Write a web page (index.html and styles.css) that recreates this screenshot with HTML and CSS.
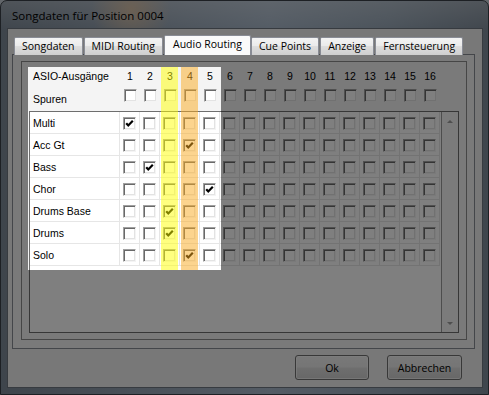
FILE: index.html
```html
<!DOCTYPE html>
<html lang="de">
<head>
    <meta charset="UTF-8">
    <title>Songdaten für Position 0004</title>
    <link rel="stylesheet" href="styles.css">
</head>
<body>
    <div class="window">
        <div class="titlebar">Songdaten für Position 0004</div>
        <div class="client">
            <div class="tabs">
                <div class="tab">Songdaten</div>
                <div class="tab">MIDI Routing</div>
                <div class="tab active">Audio Routing</div>
                <div class="tab">Cue Points</div>
                <div class="tab">Anzeige</div>
                <div class="tab">Fernsteuerung</div>
            </div>
            <div class="panel">
                <div class="frame">
                    <div class="head" id="head">
                        <div class="lbl">ASIO-Ausgänge</div>
                    </div>
                    <div class="list">
                        <div class="rows" id="rows"></div>
                        <div class="scroll">
                            <span class="arr up"></span>
                            <span class="arr down"></span>
                        </div>
                    </div>
                </div>
            </div>
            <div class="buttons">
                <button class="btn">Ok</button>
                <button class="btn">Abbrechen</button>
            </div>
        </div>
    </div>

    <!-- overlay: dims everything except the routing area -->
    <div class="spot"></div>
    <div class="mark yellow"></div>
    <div class="mark orange"></div>

    <script>
        const outputs = 16;
        const tracks = [
            ['Multi', 1],
            ['Acc Gt', 4],
            ['Bass', 2],
            ['Chor', 5],
            ['Drums Base', 3],
            ['Drums', 3],
            ['Solo', 4]
        ];
        const check = '<svg width="9" height="9" viewBox="0 0 9 9"><path d="M1.2 4.2 L3.3 6.5 L7.8 1.8" fill="none" stroke="#000" stroke-width="2.2"/></svg>';

        function box(on) {
            return `<span class="cb">${on ? check : ''}</span>`;
        }

        const head = document.getElementById('head');
        let html = head.innerHTML;
        for (let i = 1; i <= outputs; i++) {
            html += `<div class="num">${i}</div>`;
        }
        html += '<div class="lbl low">Spuren</div>';
        for (let i = 1; i <= outputs; i++) {
            html += `<div class="hc">${box(false)}</div>`;
        }
        head.innerHTML = html;

        const rows = document.getElementById('rows');
        rows.innerHTML = tracks.map(([name, out]) => {
            let cells = '';
            for (let i = 1; i <= outputs; i++) {
                cells += `<div class="cell">${box(i === out)}</div>`;
            }
            return `<div class="row"><div class="name">${name}</div>${cells}</div>`;
        }).join('');
    </script>
</body>
</html>
```

FILE: styles.css
```css
* {
    box-sizing: border-box;
}
body {
    margin: 0;
    width: 489px;
    height: 395px;
    overflow: hidden;
    position: relative;
    background: #c4ccd4;
    font-family: 'Open Sans', sans-serif;
    color: #000;
}
.window {
    height: 395px;
    display: flex;
    flex-direction: column;
    padding: 0 5px 6px 6px;
    border: 1px solid #3a4048;
    border-radius: 7px 7px 0 0;
    background:
        radial-gradient(circle at 130px 8px, rgba(255, 205, 150, 0.55), transparent 40px),
        linear-gradient(180deg, rgba(255, 255, 255, 0.25), transparent 30px),
        linear-gradient(90deg, #7d8a98, #a8b8ca 55%, #96a6b6 80%, #7f8c9a);
}
.titlebar {
    height: 27px;
    padding-left: 5px;
    line-height: 29px;
    font-size: 11.5px;
    color: #000;
}
.client {
    flex: 1;
    background: #f0f0f0;
    border: 1px solid #6e7680;
    padding: 6px 7px 0 4px;
}
.tabs {
    display: flex;
    align-items: flex-end;
    height: 20px;
    padding-left: 2px;
    margin-bottom: -1px;
    position: relative;
    z-index: 1;
}
.tab {
    height: 18px;
    padding: 0 7px;
    border: 1px solid #898c95;
    border-bottom: none;
    border-radius: 2px 2px 0 0;
    background: linear-gradient(#f3f3f3, #ebebeb 45%, #dddddd 50%, #cfcfcf);
    font-size: 10.5px;
    line-height: 17px;
    text-align: center;
    white-space: nowrap;
}
.tab + .tab {
    margin-left: 1px;
}
.tab.active {
    height: 20px;
    margin: 0 -1px 0 1px;
    padding: 0 8px;
    background: #fafafa;
    line-height: 16px;
}
.panel {
    height: 295px;
    border: 1px solid #898c95;
    background: #f4f4f4;
    padding: 6px 7px 8px 8px;
}
.frame {
    height: 100%;
    border: 1px solid #8c8c8c;
    padding: 5px 7px 6px 7px;
    font-family: 'Liberation Sans', Arial, sans-serif;
    font-size: 10.5px;
}
.head {
    display: grid;
    grid-template-columns: 90px repeat(16, 20px);
    grid-template-rows: 18px 26px;
    padding-left: 1px;
}
.head .lbl {
    padding-left: 3px;
    line-height: 18px;
}
.head .lbl.low {
    align-self: end;
    line-height: 13px;
    padding-bottom: 5px;
}
.head .num {
    text-align: center;
    line-height: 18px;
}
.head .hc {
    display: flex;
    justify-content: center;
    padding-top: 4px;
}
.list {
    display: flex;
    height: 222px;
    border: 1px solid #6e6e6e;
    background: #fff;
}
.rows {
    width: 410px;
}
.row {
    display: flex;
    height: 22px;
    border-bottom: 1px solid #e6e6e6;
}
.name {
    width: 90px;
    padding: 2px 0 0 3px;
    line-height: 19px;
    border-right: 1px solid #e6e6e6;
}
.cell {
    width: 20px;
    display: flex;
    align-items: center;
    justify-content: center;
    padding-top: 1px;
    border-right: 1px solid #e6e6e6;
}
.cb {
    display: block;
    width: 13px;
    height: 13px;
    padding: 1px 0 0 1px;
    background: #fff;
    border: 1px solid;
    border-color: #a0a0a0 #f4f4f4 #f4f4f4 #a0a0a0;
    box-shadow: inset 1px 1px 0 #696969, inset -1px -1px 0 #e3e3e3;
}
.cb svg {
    display: block;
}
.scroll {
    margin-left: auto;
    width: 17px;
    border-left: 1px solid #9a9a9a;
    background: #f6f6f6;
    display: flex;
    flex-direction: column;
    justify-content: space-between;
    align-items: center;
    padding: 8px 0 7px;
}
.arr {
    width: 0;
    height: 0;
    border-left: 3px solid transparent;
    border-right: 3px solid transparent;
}
.arr.up {
    border-bottom: 3px solid #9c9c9c;
}
.arr.down {
    border-top: 3px solid #9c9c9c;
}
.buttons {
    display: flex;
    justify-content: flex-end;
    gap: 18px;
    padding: 6px 13px 0 0;
}
.btn {
    width: 74px;
    height: 25px;
    border: 1px solid #707070;
    border-radius: 3px;
    background: linear-gradient(#f2f2f2, #ebebeb 48%, #dddddd 52%, #cfcfcf);
    box-shadow: inset 0 0 0 1px rgba(255, 255, 255, 0.6);
    font-family: 'Open Sans', sans-serif;
    font-size: 10.5px;
    color: #000;
    padding: 0;
}
.btn + .btn {
    width: 75px;
}
.spot {
    position: absolute;
    left: 28px;
    top: 67px;
    width: 193px;
    height: 203px;
    box-shadow: 0 0 0 700px rgba(0, 0, 0, 0.5);
    pointer-events: none;
}
.mark {
    position: absolute;
    top: 67px;
    width: 17px;
    height: 203px;
    pointer-events: none;
}
.yellow {
    left: 161px;
    background: rgba(255, 255, 0, 0.5);
}
.orange {
    left: 181px;
    background: rgba(250, 170, 30, 0.5);
}
```
